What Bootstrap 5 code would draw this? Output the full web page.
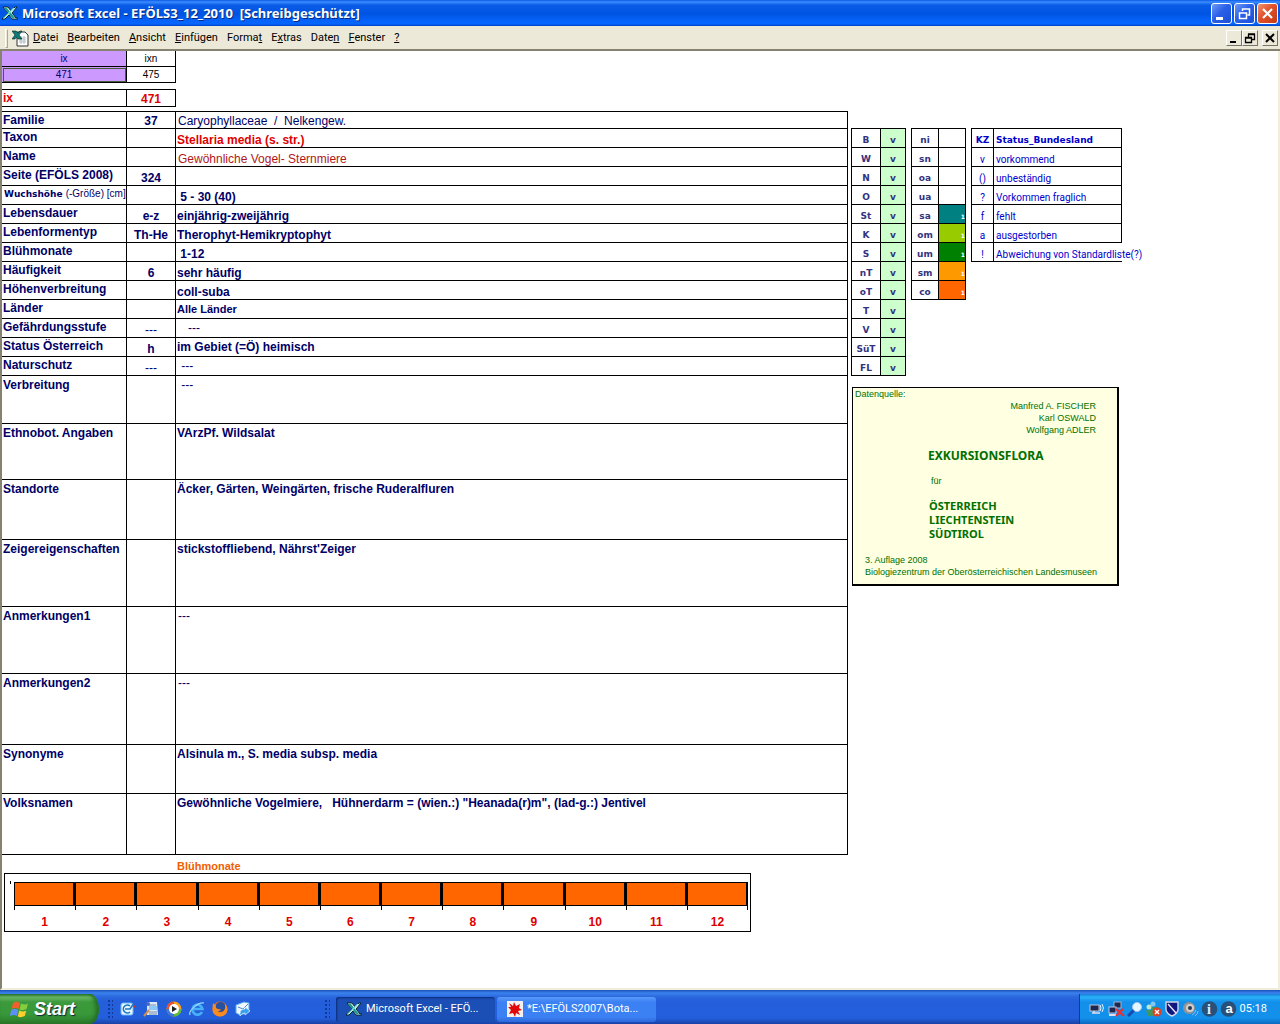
<!DOCTYPE html>
<html lang="de">
<head>
<meta charset="utf-8">
<meta name="viewport" content="width=device-width, initial-scale=1">
<title>Microsoft Excel - EFÖLS3_12_2010</title>
<link href="https://cdn.jsdelivr.net/npm/bootstrap@5.3.0/dist/css/bootstrap.min.css" rel="stylesheet">
<style>
body{font-family:"Liberation Sans",Arial,sans-serif;font-size:12px;line-height:14px;color:#000066;background:#fff}
svg{display:block;flex:none}
button{font:inherit}
.gap1{column-gap:2px}
.gap5{column-gap:5px}
.gap7{column-gap:7px}
.gap9{column-gap:9px}
.titlebar{height:26px;padding:0 2px;background:linear-gradient(#0a5be8 0,#3c8cff 2px,#0a5ce6 5px,#0054e3 14px,#0663fb 21px,#0466ff 24px,#0040c0 26px);color:#fff;font:bold 13px/26px "Noto Sans","Open Sans",sans-serif;text-shadow:1px 1px 0 #0a2a80}
.winbtn{width:21px;height:21px;padding:0;border:1px solid #fff;border-radius:3px;background:linear-gradient(135deg,#6f9bf5,#2a5fe8 45%,#1c4fd6)}
.winbtn-x{background:linear-gradient(135deg,#f0926f,#e0512a 45%,#c43a14)}
.menubar{height:25px;background:#ece9d8;border-bottom:2px solid #85836f;color:#000;font:11px/22px Roboto,sans-serif;padding:1px 2px 0 5px}
.menubar a{color:#000;text-decoration:none}
.menubar u{text-decoration-thickness:1px;text-underline-offset:1px}
.grip{width:3px;height:19px;border:1px solid;border-color:#fff #aca899 #aca899 #fff}
.docbtn{width:16px;height:16px;padding:0;background:#ece9d8;border:1px solid;border-color:#fff #77756a #77756a #fff}
.sheet{border-left:2px solid #85836f;border-bottom:2px solid #f1eddc;border-right:2px solid #f1eddc}
.tbl{border-collapse:separate;border-spacing:0;table-layout:fixed}
.tbl td,.tbl th{border:0 solid #000;border-width:0 1px 1px 0;padding:0;font-weight:bold;white-space:nowrap}
.boxed{border-top:1px solid #000}
.boxl{border-left:1px solid #000}
.c1{width:125px}.c2{width:49px}
.picker,.current{width:174px}
.picker td,.picker th{font-size:10px;font-weight:normal;text-align:center;height:16px}
.tbl .lila{background:#cc99ff}
.picker td.sel{outline:1px solid #4b5c3a;outline-offset:-2px}
.current{margin-top:6px}
.current tr{height:17px}
.current th{padding-left:1px}
.red{color:#e00000}
.brick{color:#b01818}
.main{margin-top:4px}
.main th{vertical-align:top;padding:1px 0 0 1px}
.main td{vertical-align:bottom}
.main td:nth-child(2){text-align:center}
.main td:nth-child(3){padding-left:1px;white-space:pre-wrap}
.main td.thin:nth-child(3){padding-left:2px}
.main tr{height:19px}
.main tr:first-child{height:17px}
.main .tall th,.main .tall td,.main td.up{vertical-align:top;padding-top:2px}
.main td.thin{font-weight:normal}
.h48{height:48px!important}.h49{height:49px!important}.h56{height:56px!important}.h60{height:60px!important}.h61{height:61px!important}.h67{height:67px!important}.h71{height:71px!important}
.main th.tiny{font:bold 9px/13px "DejaVu Sans",sans-serif;padding-left:2px}
.tiny span{font:10px/13px "Liberation Sans",sans-serif}
.small11{font-size:11px}
.blossom{color:#f06000;font-size:11px;padding:4px 0 0 175px}
.side{width:430px;padding:77px 0 0 3px}
.codes tr{height:19px}
.codes td,.codes th{vertical-align:bottom;text-align:center;font:bold 9px/13px "DejaVu Sans",sans-serif;color:#333380}
.codes .ok{background:#ccffcc}
.codes .one{color:#fff;font-size:6px;line-height:8px;text-align:right;padding-bottom:2px}
.w55{width:55px}.w151{width:151px}.w29{width:29px}.w27{width:27px}.w22{width:22px}
.legend td{color:#0000cc;font:10px/13px Roboto,sans-serif}
.legend th{color:#0000cc}
.legend td:last-child,.legend th:last-child{text-align:left;padding-left:2px}
.legend td.open{border-right:0}
.source{width:267px;margin:11px 0 0 1px;border:1px solid #000;border-width:1px 2px 2px 1px;background:#ffffe1;color:#007000;font-size:9px;line-height:12px;padding:0 13px 6px 2px}
.source .big{font:bold 12px/14px "Noto Sans",sans-serif;padding:13px 0 0 73px}
.source .fuer{padding:12px 0 12px 76px}
.source .lands{font-size:11px;padding:0 0 0 74px}
.source .pub{padding:13px 0 0 10px}
.chart{border:1px solid #000;margin:0 97px 0 2px;padding:8px 2px 0 9px;height:59px;position:relative}
.chart:before{content:"";position:absolute;left:5px;top:7px;width:1px;height:3px;background:#000}
.month{flex:1 1 0}
.bar{height:24px;background:#ff6600;border:1px solid #000;border-right-width:2px;margin-bottom:9px}
.month:before,.month:last-child:after{content:"";width:1px;height:4px;background:#000;position:absolute;top:24px;left:0}
.month:last-child:after{left:auto;right:0}
.taskbar{height:34px;background:linear-gradient(#1c4fb8 0,#3a82ee 3px,#2a66dc 7px,#245edb 12px,#235fdc 28px,#1941a5 34px);color:#fff;font:11px/22px Roboto,sans-serif}
.start{width:99px;height:30px;border:0;border-radius:0 9px 9px 0/0 15px 15px 0;background:linear-gradient(#2c7a2c 0,#6cb868 3px,#3c9a3c 8px,#38983a 20px,#2b7a2b 30px);box-shadow:inset -3px 0 4px #236b23;color:#fff;font:italic bold 18px/28px "Liberation Sans",sans-serif;text-shadow:1px 1px 1px #123;padding:0 0 0 10px}
.quick{padding-left:8px}
.tasks{padding-left:73px}
.dots{width:6px;height:20px;background:radial-gradient(#123a9c 1px,transparent 1px) 0 0/4px 4px}
.task{width:159px;height:25px;border:0;border-radius:3px;background:linear-gradient(#5a9afc,#3c81f3 5px,#3c81f3 20px,#2c68dc);color:#fff;text-align:left;padding:0 10px}
.task-on{background:#1c4fb5;box-shadow:inset 1px 1px 2px #0b2a78}
.tray{width:201px;height:30px;background:linear-gradient(#1a7fdc 0,#2ab0f8 3px,#1390ea 8px,#1290ea 24px,#0d68c0 30px);border-left:1px solid #0a3c8c;padding:0 13px 0 9px}
</style>
</head>
<body class="d-flex flex-column min-vh-100">
<svg width="0" height="0" class="position-absolute" aria-hidden="true">
<symbol id="xl" viewBox="0 0 16 16"><path d="M1 2h5l3 4 4-4h2l-5 6 4 5h2v1h-6L7 10l-4 4H0l6-6z" fill="#fff" stroke="#002828" stroke-width="1"/><path d="M2 3h3l8 10h-3z" fill="#1f9a94"/><path d="M13 3L3 13H1L11 3z" fill="#7adcd4"/></symbol>
</svg>
<header class="titlebar d-flex align-items-center">
  <svg width="16" height="16" class="me-1"><use href="#xl"/></svg>
  <span class="text-nowrap">Microsoft Excel - EFÖLS3_12_2010&nbsp; [Schreibgeschützt]</span>
  <div class="d-flex ms-auto gap1">
    <button class="winbtn" aria-label="Minimieren"><svg width="19" height="19"><path d="M4 13h7v3H4z" fill="#fff"/></svg></button>
    <button class="winbtn" aria-label="Wiederherstellen"><svg width="19" height="19"><path d="M7.500 7V5h7v6h-2M7 5h8M4.500 9h7v5.500h-7zM4 9h8" fill="none" stroke="#fff" stroke-width="1.500"/></svg></button>
    <button class="winbtn winbtn-x" aria-label="Schließen"><svg width="19" height="19"><path d="M5 5l9 9M14 5l-9 9" stroke="#fff" stroke-width="2.200"/></svg></button>
  </div>
</header>
<nav class="menubar d-flex align-items-center">
  <span class="grip me-1"></span>
  <svg width="17" height="17" viewBox="0 0 17 17" class="me-1"><path d="M5 2h8l3 3v11H5z" fill="#fff" stroke="#333"/><path d="M7 8h7M7 10h7M7 12h7M9 6v8M12 6v8" stroke="#9aa" stroke-width=".7"/><path d="M0 1h4l2 2 2-2h2L7 5l3 4H6L4 7 3 9H0l3-4z" fill="#0c7c78" stroke="#022" stroke-width=".6"/></svg>
  <div class="d-flex gap9">
    <a href="#"><u>D</u>atei</a><a href="#"><u>B</u>earbeiten</a><a href="#"><u>A</u>nsicht</a><a href="#"><u>E</u>infügen</a><a href="#">Forma<u>t</u></a><a href="#">E<u>x</u>tras</a><a href="#">Date<u>n</u></a><a href="#"><u>F</u>enster</a><a href="#"><u>?</u></a>
  </div>
  <div class="d-flex ms-auto">
    <button class="docbtn" aria-label="Fenster minimieren"><svg width="14" height="14"><path d="M3 10h6v2H3z"/></svg></button>
    <button class="docbtn me-1" aria-label="Fenster wiederherstellen"><svg width="14" height="14"><path d="M5.500 6V3.500h6v5H9M5 3h7M2.500 7h6v4.500h-6zM2 6.500h7" fill="none" stroke="#000" stroke-width="1.300"/></svg></button>
    <button class="docbtn" aria-label="Mappe schließen"><svg width="14" height="14"><path d="M3 3l8 8M11 3l-8 8" stroke="#000" stroke-width="2"/></svg></button>
  </div>
</nav>
<main class="sheet flex-grow-1 d-flex align-items-start">
  <div class="flex-grow-1">
    <table class="tbl picker">
      <colgroup><col class="c1"><col class="c2"></colgroup>
      <tr><th class="lila">ix</th><th class="text-black">ixn</th></tr>
      <tr><td class="lila sel">471</td><td class="text-black">475</td></tr>
    </table>
    <table class="tbl boxed current red">
      <colgroup><col class="c1"><col class="c2"></colgroup>
      <tr><th>ix</th><td class="text-center align-bottom">471</td></tr>
    </table>
    <table class="tbl boxed main w-100">
      <colgroup><col class="c1"><col class="c2"><col></colgroup>
      <tr><th>Familie</th><td>37</td><td class="thin">Caryophyllaceae  /  Nelkengew.</td></tr>
      <tr><th>Taxon</th><td></td><td class="red">Stellaria media (s. str.)</td></tr>
      <tr><th>Name</th><td></td><td class="thin brick">Gewöhnliche Vogel- Sternmiere</td></tr>
      <tr><th>Seite (EFÖLS 2008)</th><td>324</td><td></td></tr>
      <tr><th class="tiny">Wuchshöhe <span>(-Größe) [cm]</span></th><td></td><td> 5 - 30 (40)</td></tr>
      <tr><th>Lebensdauer</th><td>e-z</td><td>einjährig-zweijährig</td></tr>
      <tr><th>Lebenformentyp</th><td>Th-He</td><td>Therophyt-Hemikryptophyt</td></tr>
      <tr><th>Blühmonate</th><td></td><td> 1-12</td></tr>
      <tr><th>Häufigkeit</th><td>6</td><td>sehr häufig</td></tr>
      <tr><th>Höhenverbreitung</th><td></td><td>coll-suba</td></tr>
      <tr><th>Länder</th><td></td><td class="up small11">Alle Länder</td></tr>
      <tr><th>Gefährdungsstufe</th><td class="thin">---</td><td class="up thin">   ---</td></tr>
      <tr><th>Status Österreich</th><td>h</td><td class="up">im Gebiet (=Ö) heimisch</td></tr>
      <tr><th>Naturschutz</th><td class="thin">---</td><td class="up thin"> ---</td></tr>
      <tr class="tall h48"><th>Verbreitung</th><td></td><td class="thin"> ---</td></tr>
      <tr class="tall h56"><th>Ethnobot. Angaben</th><td></td><td>VArzPf. Wildsalat</td></tr>
      <tr class="tall h60"><th>Standorte</th><td></td><td>Äcker, Gärten, Weingärten, frische Ruderalfluren</td></tr>
      <tr class="tall h67"><th>Zeigereigenschaften</th><td></td><td>stickstoffliebend, Nährst'Zeiger</td></tr>
      <tr class="tall h67"><th>Anmerkungen1</th><td></td><td class="thin">---</td></tr>
      <tr class="tall h71"><th>Anmerkungen2</th><td></td><td class="thin">---</td></tr>
      <tr class="tall h49"><th>Synonyme</th><td></td><td>Alsinula m., S. media subsp. media</td></tr>
      <tr class="tall h61"><th>Volksnamen</th><td></td><td>Gewöhnliche Vogelmiere,   Hühnerdarm = (wien.:) "Heanada(r)m", (lad-g.:) Jentivel</td></tr>
    </table>
    <div class="fw-bold blossom">Blühmonate</div>
    <div class="chart d-flex" id="chart"></div>
  </div>
  <aside class="side flex-shrink-0">
    <div class="d-flex align-items-start gap5">
      <table class="tbl boxed boxl codes w55" id="lands"><colgroup><col class="w29"><col></colgroup></table>
      <table class="tbl boxed boxl codes w55" id="zones"><colgroup><col class="w27"><col></colgroup></table>
      <table class="tbl boxl boxed codes legend w151"><colgroup><col class="w22"><col></colgroup>
        <tr><th>KZ</th><th>Status_Bundesland</th></tr>
        <tr><td>v</td><td>vorkommend</td></tr>
        <tr><td>()</td><td>unbeständig</td></tr>
        <tr><td>?</td><td>Vorkommen fraglich</td></tr>
        <tr><td>f</td><td>fehlt</td></tr>
        <tr><td>a</td><td>ausgestorben</td></tr>
        <tr><td>!</td><td class="open">Abweichung von Standardliste(?)</td></tr>
      </table>
    </div>
    <section class="source">
      <div>Datenquelle:</div>
      <div class="text-end pe-2">Manfred A. FISCHER<br>Karl OSWALD<br>Wolfgang ADLER</div>
      <div class="big">EXKURSIONSFLORA</div>
      <div class="fuer">für</div>
      <div class="big lands">ÖSTERREICH<br>LIECHTENSTEIN<br>SÜDTIROL</div>
      <div class="text-nowrap pub">3. Auflage 2008<br>Biologiezentrum der Oberösterreichischen Landesmuseen</div>
    </section>
  </aside>
</main>
<footer class="taskbar d-flex align-items-end">
  <button class="start d-flex align-items-center">
    <svg width="20" height="20" viewBox="0 0 20 20" class="me-1"><path d="M3 4q4-3 7 0L8.500 10q-3-2-7 0z" fill="#f0602c"/><path d="M11 4.500q4 2 7 0L16.500 10q-4 2-7 .5z" fill="#84d03c"/><path d="M1.200 11q4-2 7 0L6.800 17q-3-2-7 0z" fill="#5c90f8"/><path d="M9.200 11.500q4 2 7 0L14.800 17q-4 2-7 .5z" fill="#fcd02c"/></svg>Start</button>
  <div class="quick d-flex align-items-center h-100 pt-1 gap7">
    <span class="dots"></span>
    <svg width="16" height="16" viewBox="0 0 16 16"><rect x="1" y="2" width="12" height="12" rx="2" fill="#e8f4ff" stroke="#68b8f8"/><path d="M10 5a4 4 0 1 0 0 6M5 8h5l4-6" fill="none" stroke="#1878c0" stroke-width="1.600"/><path d="M13 4l3 1-2 2z" fill="#d03020"/></svg>
    <svg width="16" height="16" viewBox="0 0 16 16"><path d="M4 1h10l1 13H4z" fill="#dce8f4"/><path d="M6 4h7M6 11h8M6 13h8" stroke="#7890b0"/><rect x="6" y="5" width="8" height="4" fill="#8cc8f8"/><path d="M6 9l-5 6" stroke="#d09050" stroke-width="2"/><circle cx="5" cy="3" r="2" fill="#4468c8"/></svg>
    <svg width="16" height="16" viewBox="0 0 16 16"><circle cx="8" cy="8" r="7.500" fill="#f8a020"/><path d="M8 8V.5A7.500 7.500 0 0 0 .5 8z" fill="#e85030"/><path d="M8 8H.5A7.500 7.500 0 0 0 8 15.500z" fill="#3878e0"/><path d="M8 8v7.500A7.500 7.500 0 0 0 15.500 8z" fill="#60b838"/><circle cx="8" cy="8" r="5" fill="#fff"/><path d="M6 5l5 3-5 3z" fill="#222"/></svg>
    <svg width="16" height="16" viewBox="0 0 16 16"><path d="M13 11a5 5 0 1 1 .5-3H5" fill="none" stroke="#48b0f8" stroke-width="2.600"/><path d="M1 14C-1 10 9 1 15 2" fill="none" stroke="#98d8ff" stroke-width="1.200"/></svg>
    <svg width="16" height="16" viewBox="0 0 16 16"><circle cx="8" cy="8" r="7.500" fill="#e86818"/><circle cx="8.500" cy="6" r="5" fill="#2850a0"/><path d="M1 2q1 2 3 2-1 3 2 4l3 .5q-1 2-3.500 1.500Q8 13 12 10q2-3 1-7 3 3 2.500 6-1 6-7.500 6.500Q0 15 .5 7z" fill="#f88c20"/></svg>
    <svg width="16" height="16" viewBox="0 0 16 16"><path d="M1 4l8-3 5 1v9l-9 3-4-2z" fill="#f0f8ff" stroke="#58a8f0"/><path d="M3 6l5 2 5-5" fill="none" stroke="#4888d0"/><path d="M5 12q0-4 5-4V6l5 4-5 4v-2q-3 0-5 3z" fill="#38a0f0" stroke="#fff" stroke-width=".6"/></svg>
  </div>
  <div class="tasks d-flex align-items-center h-100 pt-1 gap1">
    <span class="dots me-1"></span>
    <button class="task task-on d-flex align-items-center text-nowrap"><svg width="16" height="16" class="me-1"><use href="#xl"/></svg>Microsoft Excel - EFÖ...</button>
    <button class="task d-flex align-items-center text-nowrap"><svg width="16" height="16" viewBox="0 0 16 16" class="me-1"><path d="M0 0h16v16H0z" fill="#f4f0f0"/><path d="M2 2l4 3 1-4 2 4 4-2-1 4 3 2-4 1 2 4-4-2-1 4-2-4-4 1 2-4-3-3 3 0z" fill="#e00808"/></svg>*E:\EFÖLS2007\Bota...</button>
  </div>
  <div class="tray d-flex align-items-center ms-auto gap1">
    <svg width="17" height="16" viewBox="0 0 17 16"><rect x="1" y="4" width="9" height="6" fill="#1c2850" stroke="#c0c8d8"/><path d="M3 12h8M5 10v2" stroke="#dde" stroke-width="1.500"/><path d="M11 4q2 3 0 6M13 3q3 4 0 8" fill="none" stroke="#e8f4ff"/></svg>
    <svg width="17" height="16" viewBox="0 0 17 16"><rect x="6" y="1" width="7" height="6" fill="#1c2850" stroke="#a0b0d0"/><rect x="1" y="6" width="7" height="6" fill="#1c2850" stroke="#c0c8e8"/><path d="M1 14h7" stroke="#dde" stroke-width="2"/><path d="M8 8l8 7M15 8l-7 7" stroke="#e83030" stroke-width="2.200"/></svg>
    <svg width="16" height="16" viewBox="0 0 16 16"><path d="M7 9l-6 6" stroke="#1848b0" stroke-width="3"/><circle cx="10" cy="6" r="4.500" fill="#e4f6ff" stroke="#a8c8e8"/></svg>
    <svg width="17" height="16" viewBox="0 0 17 16"><circle cx="8" cy="3" r="2.500" fill="#80c8f0"/><circle cx="4" cy="6" r="2.500" fill="#c0e8c8"/><path d="M1 9h8v6H3zM7 6h6v5H7z" fill="#3c9860"/><circle cx="12" cy="11" r="4.500" fill="#e04020"/><path d="M10 9l4 4M14 9l-4 4" stroke="#fff" stroke-width="1.400"/></svg>
    <svg width="16" height="16" viewBox="0 0 16 16"><path d="M2 1h12v8q-1 4-6 6-5-2-6-6z" fill="#101880" stroke="#d0d8e8" stroke-width="1.400"/><path d="M4 3l8 9" stroke="#e8e8f8" stroke-width="1.400"/></svg>
    <svg width="17" height="16" viewBox="0 0 17 16"><circle cx="7" cy="7" r="6" fill="#909498"/><circle cx="8" cy="7" r="4" fill="#d0d0d0"/><circle cx="8" cy="7" r="2" fill="#303840"/><path d="M10 14q3-1 4-5M13 15q3-2 3-5" stroke="#88b8ff" fill="none"/></svg>
    <svg width="17" height="16" viewBox="0 0 17 16"><circle cx="8.500" cy="8" r="7.800" fill="#285078"/><text x="8" y="13" fill="#e4f0ff" font-family="Liberation Serif" font-weight="bold" font-size="14" text-anchor="middle">i</text></svg>
    <svg width="17" height="16" viewBox="0 0 17 16"><circle cx="8.500" cy="8" r="7.800" fill="#285078"/><text x="9" y="12" fill="#fff" font-family="Liberation Sans" font-weight="bold" font-size="13" text-anchor="middle">a</text></svg>
    <span class="ms-auto">05:18</span>
  </div>
</footer>
<script>
document.getElementById('lands').insertAdjacentHTML('beforeend','B W N O St K S nT oT T V SüT FL'.split(' ').map(c=>`<tr><th>${c}</th><td class="ok">v</td></tr>`).join(''));
const zones=[['ni'],['sn'],['oa'],['ua'],['sa','#008080'],['om','#99cc00'],['um','#008000'],['sm','#ff9900'],['co','#ff6600']];
document.getElementById('zones').insertAdjacentHTML('beforeend',zones.map(([c,k])=>`<tr><th>${c}</th>${k?`<td class="one" style="background:${k}">1</td>`:'<td></td>'}</tr>`).join(''));
document.getElementById('chart').innerHTML=Array.from({length:12},(_,i)=>`<div class="month position-relative text-center fw-bold red"><div class="bar"></div>${i+1}</div>`).join('');
</script>
<script src="https://cdn.jsdelivr.net/npm/bootstrap@5.3.0/dist/js/bootstrap.bundle.min.js"></script>
</body>
</html>
